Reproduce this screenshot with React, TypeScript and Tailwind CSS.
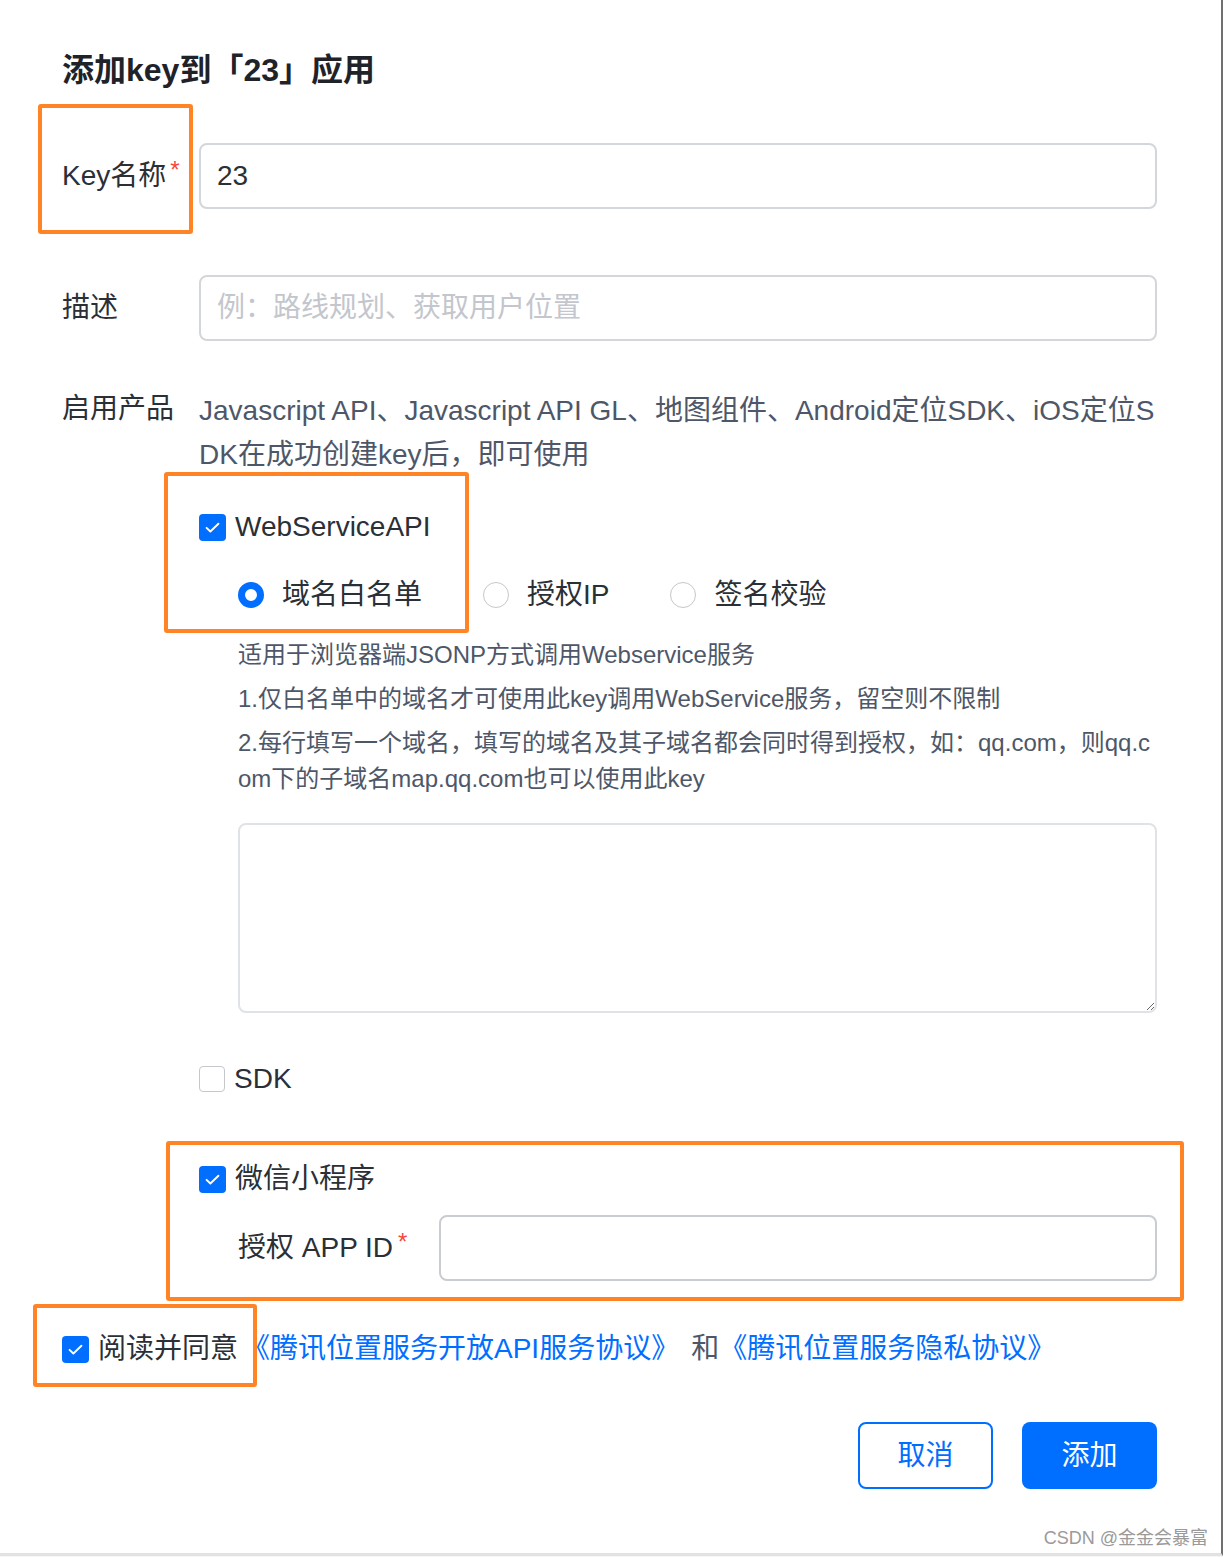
import React from "react";

const FONT = { fontFamily: '"Liberation Sans", Arial, "Noto Sans CJK SC", sans-serif' };

function Check({ checked }: { checked: boolean }) {
  if (!checked) {
    return <span className="block w-[26px] h-[26px] rounded-[4px] border-[1.5px] border-[#c4c7cc] bg-white shrink-0" />;
  }
  return (
    <span className="flex items-center justify-center w-[27px] h-[27px] rounded-[4px] bg-[#006eff] shrink-0">
      <svg width="19" height="19" viewBox="0 0 16 16" fill="none">
        <path d="M3 8.3l3.2 3.1L13 4.8" stroke="white" strokeWidth="1.6" strokeLinecap="round" strokeLinejoin="round" />
      </svg>
    </span>
  );
}

function Radio({ checked, label }: { checked: boolean; label: string }) {
  return (
    <div className="flex items-center gap-[18px]">
      {checked ? (
        <span className="block w-[26px] h-[26px] rounded-full border-[7px] border-[#006eff] bg-white shrink-0" />
      ) : (
        <span className="block w-[26px] h-[26px] rounded-full border-[1.5px] border-[#c4c7cc] bg-white shrink-0" />
      )}
      <span className="text-[28px] text-[#2b2f36]">{label}</span>
    </div>
  );
}

export default function App() {
  return (
    <div className="relative w-[1223px] h-[1557px] bg-[#f7f7f7]" style={FONT}>
      <div className="w-[1223px] h-[1556px] bg-white border-r-2 border-r-[#707070] border-b-[3px] border-b-[#e2e2e2] pt-[50px] pl-[62px] pr-[64px]">
        <h1 className="text-[32px] leading-[40px] font-bold text-[#1f2329]">添加key到「23」应用</h1>

        {/* key name */}
        <div className="flex items-center mt-[53px]">
          <div className="w-[137px] shrink-0 text-[28px] text-[#2b2f36] flex items-start">
            Key名称<span className="text-[#f5473e] text-[24px] leading-none ml-[4px] mt-[3px]">*</span>
          </div>
          <div className="flex-1 h-[66px] border-2 border-[#d3d6db] rounded-[8px] px-4 flex items-center text-[28px] text-[#2b2f36]">
            23
          </div>
        </div>

        {/* description */}
        <div className="flex items-center mt-[66px]">
          <div className="w-[137px] shrink-0 text-[28px] text-[#2b2f36]">描述</div>
          <div className="flex-1 h-[66px] border-2 border-[#d3d6db] rounded-[8px] px-4 flex items-center text-[28px] text-[#c3c6cc]">
            例：路线规划、获取用户位置
          </div>
        </div>

        {/* products */}
        <div className="flex mt-[48px]">
          <div className="w-[137px] shrink-0 text-[28px] leading-[40px] text-[#2b2f36]">启用产品</div>
          <div className="flex-1 min-w-0">
            <p className="text-[28px] leading-[44px] text-[#4e5768] break-all">
              Javascript API、Javascript API GL、地图组件、Android定位SDK、iOS定位SDK在成功创建key后，即可使用
            </p>

            <div className="flex items-center gap-[9px] h-[40px] mt-[30px]">
              <Check checked />
              <span className="text-[28px] text-[#2b2f36]">WebServiceAPI</span>
            </div>

            <div className="pl-[39px]">
              <div className="flex items-center gap-[61px] h-[40px] mt-[28px]">
                <Radio checked label="域名白名单" />
                <Radio checked={false} label="授权IP" />
                <Radio checked={false} label="签名校验" />
              </div>

              <div className="mt-[22px] text-[24px] leading-[36px] text-[#4e5768] break-all">
                <p>适用于浏览器端JSONP方式调用Webservice服务</p>
                <p className="mt-2">1.仅白名单中的域名才可使用此key调用WebService服务，留空则不限制</p>
                <p className="mt-2">2.每行填写一个域名，填写的域名及其子域名都会同时得到授权，如：qq.com，则qq.com下的子域名map.qq.com也可以使用此key</p>
              </div>

              <textarea className="block w-full h-[190px] mt-[26px] border-2 border-[#dfe2e6] rounded-[8px] outline-none" />
            </div>

            <div className="flex items-center gap-[9px] h-[40px] mt-[46px]">
              <Check checked={false} />
              <span className="text-[28px] text-[#2b2f36]">SDK</span>
            </div>

            <div className="flex items-center gap-[9px] h-[40px] mt-[60px]">
              <Check checked />
              <span className="text-[28px] text-[#2b2f36]">微信小程序</span>
            </div>

            <div className="flex items-center mt-[16px] pl-[39px]">
              <div className="w-[201px] shrink-0 text-[28px] text-[#2b2f36] flex items-start">
                授权 APP ID<span className="text-[#f5473e] text-[24px] leading-none ml-[5px] mt-[3px]">*</span>
              </div>
              <div className="flex-1 h-[66px] border-2 border-[#c9ccd1] rounded-[8px]" />
            </div>
          </div>
        </div>

        {/* agreement */}
        <div className="flex items-center h-[40px] mt-[48px] text-[28px]">
          <Check checked />
          <span className="ml-[9px] text-[#2b2f36]">阅读并同意</span>
          <span className="ml-[4px] text-[#006eff]">《腾讯位置服务开放API服务协议》</span>
          <span className="ml-[12px] text-[#4e5768]">和</span>
          <span className="text-[#006eff]">《腾讯位置服务隐私协议》</span>
        </div>

        {/* buttons */}
        <div className="flex justify-end gap-[29px] mt-[53px]">
          <button className="w-[135px] h-[67px] border-2 border-[#006eff] rounded-[8px] text-[28px] text-[#006eff] bg-white">取消</button>
          <button className="w-[135px] h-[67px] rounded-[8px] text-[28px] text-white bg-[#006eff]">添加</button>
        </div>

        <div className="flex justify-end mt-[36px] -mr-[51px] text-[18px] text-[#9a9a9a]">CSDN @金金会暴富</div>
      </div>

      {/* annotation boxes */}
      <div className="absolute left-[38px] top-[104px] w-[155px] h-[130px] border-4 border-[#ff8426] rounded-[3px]" />
      <div className="absolute left-[164px] top-[472px] w-[305px] h-[161px] border-4 border-[#ff8426] rounded-[3px]" />
      <div className="absolute left-[166px] top-[1141px] w-[1018px] h-[160px] border-4 border-[#ff8426] rounded-[3px]" />
      <div className="absolute left-[33px] top-[1304px] w-[224px] h-[83px] border-4 border-[#ff8426] rounded-[3px]" />
    </div>
  );
}
